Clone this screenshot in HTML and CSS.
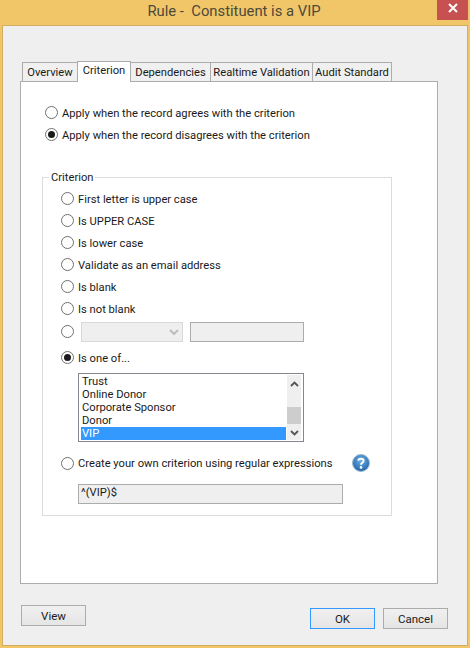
FILE: index.html
```html
<!DOCTYPE html>
<html lang="en">
<head>
    <meta charset="UTF-8">
    <meta name="viewport" content="width=device-width, initial-scale=1.0">
    <title>Rule - Constituent is a VIP</title>
    <link rel="stylesheet" href="styles.css">
</head>
<body>
    <div class="window">
        <div class="title-bar">
            <span class="title">Rule -&nbsp; Constituent is a VIP</span>
            <button class="close-button">
                <svg width="10" height="10" viewBox="0 0 10 10"><path d="M1 1L9 9M9 1L1 9" stroke="#fff" stroke-width="2"/></svg>
            </button>
        </div>

        <div class="client">
            <div class="tabs">
                <div class="tab tab-overview">Overview</div>
                <div class="tab tab-criterion active">Criterion</div>
                <div class="tab tab-dependencies">Dependencies</div>
                <div class="tab tab-realtime">Realtime Validation</div>
                <div class="tab tab-audit">Audit Standard</div>
            </div>

            <div class="panel">
                <div class="apply-options">
                    <div class="option"><span class="radio"></span>Apply when the record agrees with the criterion</div>
                    <div class="option"><span class="radio checked"></span>Apply when the record disagrees with the criterion</div>
                </div>

                <div class="group">
                    <div class="group-label">Criterion</div>
                    <div class="option"><span class="radio"></span>First letter is upper case</div>
                    <div class="option"><span class="radio"></span>Is UPPER CASE</div>
                    <div class="option"><span class="radio"></span>Is lower case</div>
                    <div class="option"><span class="radio"></span>Validate as an email address</div>
                    <div class="option"><span class="radio"></span>Is blank</div>
                    <div class="option"><span class="radio"></span>Is not blank</div>

                    <div class="option option-fields">
                        <span class="radio"></span>
                        <div class="select">
                            <svg width="10" height="6" viewBox="0 0 10 6"><path d="M1 1L5 5L9 1" fill="none" stroke="#bdbdbd" stroke-width="2"/></svg>
                        </div>
                        <div class="text-box small"></div>
                    </div>

                    <div class="option option-oneof"><span class="radio checked"></span>Is one of...</div>

                    <div class="listbox">
                        <div class="list-items">
                            <div class="list-item">Trust</div>
                            <div class="list-item">Online Donor</div>
                            <div class="list-item">Corporate Sponsor</div>
                            <div class="list-item">Donor</div>
                            <div class="list-item selected">VIP</div>
                        </div>
                        <div class="scrollbar">
                            <svg width="9" height="6" viewBox="0 0 9 6"><path d="M1 5L4.5 1.5L8 5" fill="none" stroke="#555" stroke-width="1.8"/></svg>
                            <div class="scroll-track"><div class="scroll-thumb"></div></div>
                            <svg width="9" height="6" viewBox="0 0 9 6"><path d="M1 1L4.5 4.5L8 1" fill="none" stroke="#555" stroke-width="1.8"/></svg>
                        </div>
                    </div>

                    <div class="option option-regex">
                        <span class="radio"></span><span class="regex-label">Create your own criterion using regular expressions</span>
                        <svg class="help-icon" width="20" height="20" viewBox="0 0 20 20">
                            <defs>
                                <radialGradient id="helpFill" cx="50%" cy="35%" r="65%">
                                    <stop offset="0" stop-color="#6fb0e8"/>
                                    <stop offset="1" stop-color="#1f63a8"/>
                                </radialGradient>
                            </defs>
                            <circle cx="10" cy="10" r="8.5" fill="url(#helpFill)" stroke="#9db8d2"/>
                            <path d="M7.3 7.6C7.5 5.2 12.6 5 12.6 7.8C12.6 9.8 10 9.6 10 11.8" fill="none" stroke="#fff" stroke-width="2"/>
                            <circle cx="10" cy="14.4" r="1.3" fill="#fff"/>
                        </svg>
                    </div>

                    <div class="text-box regex">^(VIP)$</div>
                </div>
            </div>

            <div class="footer">
                <button class="btn btn-view">View</button>
                <div class="footer-right">
                    <button class="btn btn-default">OK</button>
                    <button class="btn">Cancel</button>
                </div>
            </div>
        </div>
    </div>
</body>
</html>
```

FILE: styles.css
```css
* {
    margin: 0;
    padding: 0;
    box-sizing: border-box;
}

body {
    font-family: 'Roboto', 'Liberation Sans', sans-serif;
    font-size: 11.2px;
    color: #1a1a1a;
    width: 470px;
    height: 648px;
    overflow: hidden;
}

.window {
    width: 470px;
    height: 648px;
    background-color: #f0c669;
    padding: 0 2px 2px;
    display: flex;
    flex-direction: column;
}

.title-bar {
    height: 25px;
    flex: none;
    display: flex;
    justify-content: center;
    position: relative;
}

.title {
    font-size: 14.8px;
    line-height: 23px;
    color: #4d4a3c;
    margin-right: 2px;
}

.close-button {
    position: absolute;
    top: 0;
    right: 0;
    width: 31px;
    height: 20px;
    border: none;
    background-color: #c75050;
    display: flex;
    justify-content: center;
    align-items: center;
    padding-bottom: 5px;
}

.client {
    flex: 1;
    background-color: #efefef;
    border: 1px solid #d2ae60;
    padding: 35px 18px 0 17px;
}

/* tabs */
.tabs {
    display: flex;
    align-items: flex-end;
    height: 20px;
    padding-left: 2px;
    position: relative;
    z-index: 1;
}

.tab {
    height: 19px;
    background-color: #f0f0f0;
    border: 1px solid #acacac;
    border-bottom: none;
    padding-top: 1px;
    line-height: 18px;
    text-align: center;
    white-space: nowrap;
    margin-right: -1px;
}

.tab.active {
    height: 21px;
    background-color: #fff;
    padding-top: 0;
    line-height: 17px;
    margin-bottom: -1px;
    padding-bottom: 3px;
    position: relative;
}

.tab-overview { width: 56px; }
.tab-criterion { width: 54px; }
.tab-dependencies { width: 81px; }
.tab-realtime { width: 103px; }
.tab-audit { width: 80px; }

.panel {
    height: 503px;
    width: 418px;
    background-color: #fff;
    border: 1px solid #acacac;
    padding: 19px 21px;
}

/* radio rows */
.option {
    height: 22px;
    padding-top: 2px;
    display: flex;
    align-items: center;
    white-space: nowrap;
}

.radio {
    width: 13px;
    height: 13px;
    flex: none;
    border: 1px solid #707070;
    border-radius: 50%;
    background-color: #fff;
    margin-top: -2px;
    margin-right: 4px;
    display: flex;
    justify-content: center;
    align-items: center;
}

.radio.checked::after {
    content: "";
    width: 7px;
    height: 7px;
    border-radius: 50%;
    background-color: #1a1a1a;
}

.apply-options {
    margin-bottom: 32px;
    padding-left: 3px;
}

/* criterion group box */
.group {
    position: relative;
    width: 350px;
    height: 339px;
    border: 1px solid #dcdcdc;
    padding: 9px 18px 0;
}

.group-label {
    position: absolute;
    top: -7px;
    left: 6px;
    padding: 0 2px;
    line-height: 14px;
    background-color: #fff;
}

.option-fields {
    height: 23px;
    padding-top: 0;
    margin-top: 1px;
}

.option-fields .radio {
    margin-top: 0;
    margin-right: 7px;
}

.select {
    width: 102px;
    height: 20px;
    margin-right: 7px;
    background-color: #efefef;
    border: 1px solid #d9d9d9;
    display: flex;
    justify-content: flex-end;
    align-items: center;
    padding-right: 3px;
}

.text-box {
    background-color: #efefef;
    border: 1px solid #acacac;
    height: 20px;
}

.text-box.small {
    width: 114px;
}

.option-oneof {
    margin-top: 3px;
}

.listbox {
    width: 226px;
    height: 69px;
    margin: 5px 0 0 17px;
    background-color: #fff;
    border: 1px solid #828790;
    padding: 1px 2px;
    display: flex;
}

.list-items {
    width: 205px;
    flex: none;
}

.list-item {
    height: 13px;
    line-height: 12px;
    padding-top: 1px;
    padding-left: 1px;
}

.list-item.selected {
    background-color: #3399ff;
    color: #fff;
}

.scrollbar {
    width: 15px;
    margin-left: 1px;
    background-color: #efefef;
    display: flex;
    flex-direction: column;
    align-items: center;
    justify-content: space-between;
    padding: 6px 0 4px;
}

.scroll-track {
    flex: 1;
    width: 100%;
    display: flex;
    align-items: flex-end;
    padding-bottom: 6px;
}

.scroll-thumb {
    width: 100%;
    height: 17px;
    background-color: #cdcdcd;
}

.option-regex {
    margin-top: 10px;
    padding-top: 0;
}

.option-regex .radio {
    margin-top: 0;
}

.regex-label {
    width: 273px;
}

.help-icon {
    flex: none;
}

.text-box.regex {
    width: 265px;
    margin: 10px 0 0 17px;
    padding-left: 2px;
    line-height: 15px;
}

/* bottom buttons */
.footer {
    display: flex;
    justify-content: space-between;
    padding: 21px 1px 0 1px;
}

.footer-right {
    display: flex;
    gap: 8px;
    padding-top: 3px;
}

.btn {
    width: 65px;
    height: 21px;
    font-family: inherit;
    font-size: 11.5px;
    color: #1a1a1a;
    border: 1px solid #acacac;
    background: linear-gradient(to bottom, #f0f0f0, #e5e5e5);
}

.btn-default {
    border-color: #3399ff;
}
```
